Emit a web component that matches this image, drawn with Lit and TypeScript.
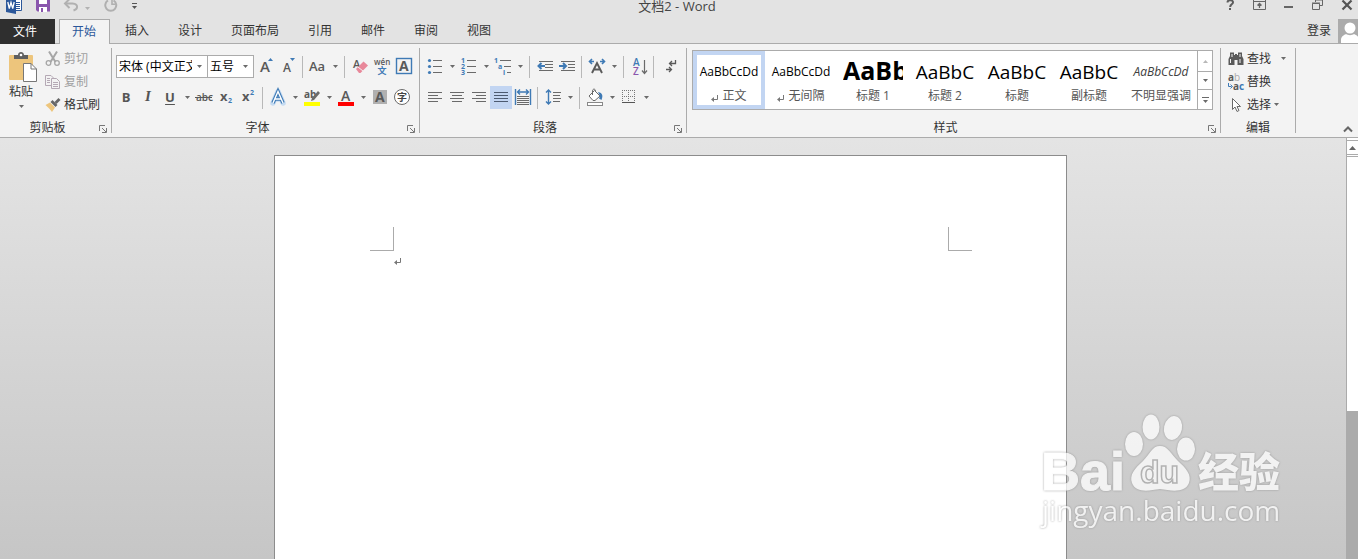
import { LitElement, html, svg, css, nothing, TemplateResult, SVGTemplateResult } from "lit";
import { customElement, property } from "lit/decorators.js";
import { classMap } from "lit/directives/class-map.js";

const icon = (w: number, h: number, body: SVGTemplateResult) =>
  html`<svg width=${w} height=${h} viewBox="0 0 ${w} ${h}" aria-hidden="true">${body}</svg>`;

const lines = (rows: number[][], stroke = "#6a6a6a") =>
  rows.map(([x1, x2, y]) => svg`<rect x=${x1} y=${y} width=${x2 - x1} height="1" fill=${stroke} />`);

const caret = icon(5, 3, svg`<path d="M0 0H5L2.500 3Z" fill="#6a6a6a"/>`);
const caretUp = (fill: string) => icon(7, 4, svg`<path d="M0 4H7L3.500 0Z" fill=${fill}/>`);
const returnMark = icon(7, 7, svg`<path d="M6.500 0V4.500H2" fill="none" stroke="#777"/><path d="M3 2V7L0 4.500Z" fill="#777"/>`);

const BLUE = "#3f7ab5";
const GREY = "#595959";

const icons: Record<string, TemplateResult> = {
  word: icon(16, 14, svg`<path d="M9 -3H15.500V10.500H9Z" fill="#fff" stroke="#2b579a"/>
    <path d="M10 2.500H14M10 4.500H14M10 6.500H14M10 8.500H14" stroke="#2b579a"/>
    <path d="M0 -2L10 -4V14L0 12Z" fill="#2b579a"/>
    <path d="M1.800 2L3.300 8.500L5 2.500L6.700 8.500L8.200 2" fill="none" stroke="#fff" stroke-width="1.300"/>`),
  save: icon(14, 12, svg`<path d="M0 -2H14V11.500H1.500L0 10Z" fill="#8a56ad"/><rect x="3" y="-2" width="8" height="6" fill="#fff"/>
    <rect x="3" y="7" width="8" height="5" fill="#fff"/><rect x="5" y="8" width="2" height="4" fill="#8a56ad"/>`),
  undo: icon(15, 12, svg`<path d="M2 3.500H8.500C12 3.500 13.500 5.500 13 7.500C12.700 9 11 10 9.500 10.500" fill="none" stroke="#b0b0b0" stroke-width="2"/>
    <path d="M5.500 -1L1 3.500L5.500 8" fill="none" stroke="#b0b0b0" stroke-width="2"/>`),
  redo: icon(14, 12, svg`<path d="M9.500 0.500A5.500 5.500 0 1 1 4 0.500" fill="none" stroke="#b0b0b0" stroke-width="2"/>
    <path d="M8 -1V4.200H11.500" fill="none" stroke="#b0b0b0" stroke-width="1.600"/>`),
  customize: icon(5, 12, svg`<rect y="3" width="5" height="1" fill="#555"/><path d="M0 6H5L2.500 9Z" fill="#555"/>`),
  help: icon(9, 12, svg`<path d="M1.500 2.500C1.500 -0.500 7 -0.500 7 2.200C7 4.500 4.200 4.200 4.200 7" fill="none" stroke="#5c5c5c" stroke-width="2"/><rect x="3" y="8" width="2" height="2" fill="#5c5c5c"/>`),
  ribbonMode: icon(13, 12, svg`<path d="M0.500 -1V9.500H12.500V-1M0 1.500H13" fill="none" stroke="#666"/><path d="M6.500 8V4M4.500 5.500L6.500 3.500L8.500 5.500" fill="none" stroke="#666" stroke-width="1.300"/>`),
  minimize: icon(9, 12, svg`<rect y="6" width="9" height="2" fill="#666"/>`),
  restore: icon(11, 12, svg`<path d="M3.500 2V-0.500H10.500V5.500H8M0.500 3.500H7.500V9.500H0.500ZM0 3H8M3 0H11" fill="none" stroke="#666"/>`),
  close: icon(10, 12, svg`<path d="M0.500 0.500L9.500 9.500M9.500 0.500L0.500 9.500" stroke="#555" stroke-width="2.200"/>`),
  avatar: icon(20, 24, svg`<rect width="20" height="24" fill="#ababab"/><circle cx="12" cy="9" r="5.500" fill="#fff"/>
    <path d="M3 24V21C3 17.500 6 16 8 15C10 16.500 14 16.500 16 15C18 16 20 17 20 18V24Z" fill="#fff"/>`),
  paste: icon(30, 32, svg`<g transform="translate(2 -1)"><rect x="1" y="4" width="24" height="25" rx="1" fill="#edc57c"/><path d="M6 4H10C10 0 16 0 16 4H20V8H6Z" fill="#5f5f5f"/><circle cx="13" cy="4" r="1.300" fill="#fff"/>
    <path d="M15.500 12.500H23L28.500 18V30.500H15.500Z" fill="#fff" stroke="#777"/><path d="M23 12.500V18H28.500" fill="none" stroke="#777"/></g>`),
  cut: icon(16, 16, svg`<path d="M4 0.500L10.500 11M12 0.500L5.500 11" stroke="#a6a6a6" stroke-width="2"/><circle cx="3.500" cy="12" r="2.300" fill="none" stroke="#a6a6a6" stroke-width="1.300"/><circle cx="12" cy="12" r="2.300" fill="none" stroke="#a6a6a6" stroke-width="1.300"/>`),
  copy: icon(16, 16, svg`<g fill="#f3f3f3" stroke="#b5a9b5"><path d="M0.500 1.500H6L8.500 4V11.500H0.500Z"/><path d="M6.500 4.500H11.500L14.500 7.500V14.500H6.500Z"/><path d="M2 4.500H5M2 6.500H5M2 8.500H5M8 8.500H13M8 10.500H13M8 12.500H13"/></g>`),
  painter: icon(16, 16, svg`<path d="M0.500 8L5 5.500L10 10.500L7 15C5 12 3 10.500 0.500 8Z" fill="#edc57c"/><path d="M5.500 5L7.500 3L12.500 8L10.500 10Z" fill="#666"/><path d="M9.500 5L13.500 1L15.500 3L11.500 7Z" fill="#666"/>`),
  grow: icon(16, 18, svg`<text class="g" x="2" y="15" font-size="15" font-weight="600">A</text><path d="M10 4H15L12.500 1Z" fill=${BLUE}/>`),
  shrink: icon(16, 18, svg`<text class="g" x="3" y="15" font-size="12" font-weight="600">A</text><path d="M10 1H15L12.500 4Z" fill=${BLUE}/>`),
  changeCase: icon(18, 18, svg`<text class="g" x="0" y="14" font-size="13" font-weight="600">Aa</text>`),
  clear: icon(16, 18, svg`<text class="g" x="1" y="11" font-size="11" font-weight="600">A</text><path d="M4 12L11.500 4.500L16 8.500L8.500 16H7Z" fill="#e8889a"/><path d="M6 10L11 14" stroke="#f3f3f3"/>`),
  phonetic: icon(18, 18, svg`<text class="g" x="1" y="8" font-size="8" font-weight="600">wén</text><text class="cjk" x="4.500" y="17" font-size="9" font-weight="700" fill=${BLUE}>文</text>`),
  border: icon(16, 18, svg`<rect x="0.500" y="1.500" width="15" height="15" fill="none" stroke=${BLUE} stroke-width="1.400"/><text class="g" x="3" y="14" font-size="14" font-weight="700">A</text>`),
  strike: icon(18, 16, svg`<text class="g" x="1" y="12" font-size="10" font-weight="600">abc</text><rect x="0" y="8" width="17" height="1" fill=${GREY}/>`),
  sub: icon(16, 16, svg`<text class="g" x="2" y="12" font-size="13" font-weight="700">x</text><text class="b" x="10" y="14" font-size="7" font-weight="700">2</text>`),
  sup: icon(16, 16, svg`<text class="g" x="2" y="12" font-size="13" font-weight="700">x</text><text class="b" x="10" y="6" font-size="7" font-weight="700">2</text>`),
  effects: icon(18, 18, svg`<path d="M4 15L9 3.500L14 15M6 11H12" fill="none" stroke="#c6dcf2" stroke-width="5.500" stroke-linejoin="round" stroke-linecap="round"/><path d="M4 15L9 3.500L14 15M6 11H12" fill="none" stroke=${BLUE} stroke-width="3.600"/><path d="M4 15L9 3.500L14 15M6 11H12" fill="none" stroke="#fff" stroke-width="1.400"/>`),
  highlight: icon(18, 18, svg`<text class="g" x="1" y="10" font-size="10" font-weight="700">ab</text><path d="M8 13L9 10L15 3L17 5L11 12Z" fill="#6a6a6a"/><rect x="1" y="14" width="16" height="4" fill="#ff0"/>`),
  fontColor: icon(18, 18, svg`<text class="g" x="4" y="13" font-size="14" font-weight="600">A</text><rect x="1" y="14" width="16" height="4" fill="#f00"/>`),
  shade: icon(14, 16, svg`<rect y="1" width="14" height="14" fill="#b0b0b0"/><text class="g" x="2" y="13" font-size="14" font-weight="700">A</text>`),
  enclose: icon(18, 18, svg`<circle cx="9" cy="9" r="7.500" fill="#fff" stroke="#6a6a6a"/><text class="cjk" x="4" y="12.700" font-size="10" fill="#444">字</text>`),
  bullets: icon(16, 16, svg`<g fill=${BLUE}><circle cx="2.500" cy="2.500" r="1.600"/><circle cx="2.500" cy="8.500" r="1.600"/><circle cx="2.500" cy="14.500" r="1.600"/></g>${lines([[6, 15, 2], [6, 15, 8], [6, 15, 14]])}`),
  numbers: icon(16, 18, svg`<g class="b" font-size="7" font-weight="700"><text x="0" y="6">1</text><text x="0" y="12">2</text><text x="0" y="18">3</text></g>${lines([[6, 15, 3], [6, 15, 9], [6, 15, 15]])}`),
  multilevel: icon(18, 18, svg`<g class="b" font-size="7" font-weight="700"><text x="0" y="6">1</text><text x="4" y="12">a</text><text x="9" y="18">i</text></g>${lines([[6, 17, 3], [10, 17, 9], [13, 17, 15]])}`),
  outdent: icon(16, 16, svg`${lines([[2, 16, 3], [8, 16, 6], [8, 16, 9], [2, 16, 12]])}<path d="M8 8H2M4.500 5L1.500 8L4.500 11" fill="none" stroke=${BLUE} stroke-width="2"/>`),
  indent: icon(16, 16, svg`${lines([[2, 16, 3], [9, 16, 6], [9, 16, 9], [2, 16, 12]])}<path d="M0 8H6M4 5L7 8L4 11" fill="none" stroke=${BLUE} stroke-width="2"/>`),
  scale: icon(18, 18, svg`<path d="M4 16L9 6L14 16M6 12.500H12" fill="none" stroke="#5a5a5a" stroke-width="1.900"/><path d="M6 4.500H2M4 2L1.500 4.500L4 7M12 4.500H16M14 2L16.500 4.500L14 7" fill="none" stroke=${BLUE} stroke-width="1.600"/>`),
  sort: icon(16, 18, svg`<text class="b" x="2" y="9" font-size="10" font-weight="600">A</text><text x="2" y="18" font-size="10" font-weight="600" fill="#8a56ad">Z</text><path d="M13.500 3V16M11 13.500L13.500 16.500L16 13.500" fill="none" stroke="#6a6a6a" stroke-width="1.200"/>`),
  marks: icon(14, 16, svg`<path d="M13.500 2V5.500H8M10 3L7.500 5.500L10 8M4 11.500H9M7 9L9.500 11.500L7 14" fill="none" stroke="#5a5a5a" stroke-width="1.300"/>`),
  left: icon(14, 16, svg`${lines([[0, 14, 3], [0, 10, 6], [0, 14, 9], [0, 10, 12]])}`),
  center: icon(14, 16, svg`${lines([[0, 14, 3], [2, 12, 6], [0, 14, 9], [2, 12, 12]])}`),
  right: icon(14, 16, svg`${lines([[0, 14, 3], [4, 14, 6], [0, 14, 9], [4, 14, 12]])}`),
  justify: icon(14, 16, svg`${lines([[0, 14, 3], [0, 14, 6], [0, 14, 9], [0, 14, 12]], "#4c5a70")}`),
  distribute: icon(16, 16, svg`<path d="M0.500 0V16M15.500 0V16M3 3H13M5 0.500L2.500 3L5 5.500M11 0.500L13.500 3L11 5.500" fill="none" stroke=${BLUE} stroke-width="1.400"/>${lines([[2, 14, 7], [2, 14, 9], [2, 14, 11], [2, 14, 13], [2, 14, 15]])}`),
  spacing: icon(16, 18, svg`<path d="M3.500 2V16M1 4.500L3.500 2L6 4.500M1 13.500L3.500 16L6 13.500" fill="none" stroke=${BLUE} stroke-width="1.400"/>${lines([[8, 16, 4], [8, 15, 7], [8, 16, 10], [8, 15, 13]])}`),
  bucket: icon(18, 18, svg`<path d="M3 8L8.500 2.500L14 8L9 12.500H7Z" fill="#fff" stroke="#6a6a6a"/><path d="M6.500 7V3C6.500 0.500 9.500 0.500 9.500 3" fill="none" stroke="#6a6a6a"/><path d="M12 4C17 5 17 8 15.500 12L13 10.500L14 8Z" fill=${BLUE}/><rect x="1.500" y="14.500" width="15" height="3" fill="#fff" stroke="#888"/>`),
  borders: icon(14, 16, svg`<path d="M0.500 1V12M6.500 1V12M12.500 1V12M0 1.500H13M0 7.500H13" stroke="#777" stroke-dasharray="1 1"/><rect y="13" width="13" height="1" fill="#555"/>`),
  find: icon(16, 16, svg`<path d="M2 1.500H6V4H7V3H9V4H10V1.500H14V5L15.500 8V14H9.500V9H6.500V14H0.500V8L2 5Z" fill="#5a5a5a"/><path d="M2.500 8V12M12 8V12M4 3V6M12 3V6" stroke="#f3f3f3"/>`),
  replace: icon(16, 18, svg`<text class="g" x="0" y="8" font-size="10" font-weight="700">a<tspan fill="#ababab" font-weight="400">b</tspan></text><text class="g" x="5" y="17" font-size="10" font-weight="700">a<tspan fill=${BLUE}>c</tspan></text><path d="M0.500 10V13.500H3.500M2.500 11.500L4.500 13.500L2.500 15.500" fill="none" stroke=${BLUE}/>`),
  select: icon(16, 16, svg`<path d="M4.500 1.500V12.500L7 10L9 14.500L11 13.500L9 9.500H12.500Z" fill="#fff" stroke="#6a6a6a"/>`),
  launcher: icon(8, 8, svg`<path d="M0.500 6V0.500H6M3 3L7 7M7.500 3V7.500H3" fill="none" stroke="#777"/>`),
};

/** A push button on a command row, optionally followed by its drop-down arrow. */
@customElement("ribbon-tool")
class RibbonTool extends LitElement {
  @property() name = "";
  @property() label = "";
  @property({ type: Boolean }) menu = false;
  @property({ type: Boolean }) pressed = false;

  static styles = css`
    :host { display: flex; height: 23px; }
    button { display: flex; align-items: center; justify-content: center; box-sizing: border-box; border: 0; padding: 0 0 2px; background: none; font: bold 13px "Open Sans", sans-serif; color: #555; }
    .main { width: 22px; }
    .main.pressed { background: #c2d5f2; }
    .drop { width: 12px; padding: 0; }
    svg { display: block; overflow: visible; font-family: "Open Sans", sans-serif; }
    .g { fill: #595959; }
    .b { fill: #3f7ab5; }
    .cjk { font-family: "Noto Sans CJK SC", sans-serif; }
    .italic { font-family: "Liberation Serif", serif; font-style: italic; font-size: 15px; }
    .under { text-decoration: underline; text-underline-offset: 2px; }
  `;

  private glyph() {
    if (this.name === "bold") return html`<span>B</span>`;
    if (this.name === "italic") return html`<span class="italic">I</span>`;
    if (this.name === "underline") return html`<span class="under">U</span>`;
    return icons[this.name];
  }

  render() {
    return html`<button class=${classMap({ main: true, pressed: this.pressed })} aria-label=${this.label} aria-pressed=${this.pressed}>${this.glyph()}</button>
      ${this.menu ? html`<button class="drop" aria-label="${this.label}选项">${caret}</button>` : nothing}`;
  }
}

/** A titled section of the ribbon. */
@customElement("ribbon-group")
class RibbonGroup extends LitElement {
  @property() label = "";
  @property({ type: Boolean }) launcher = false;

  static styles = css`
    :host { display: flex; flex-direction: column; flex: none; box-sizing: border-box; border-right: 1px solid #ababab; }
    .body { flex: 1; }
    .foot { display: flex; height: 10px; align-items: center; color: #333; }
    .title { flex: 1; text-align: center; line-height: 10px; }
    .launch { width: 16px; height: 10px; display: flex; align-items: center; justify-content: center; border: 0; padding: 2px 0 0; background: none; }
  `;

  render() {
    return html`<div class="body"><slot></slot></div>
      <div class="foot"><span class="title">${this.label}</span>
        ${this.launcher ? html`<button class="launch" aria-label="${this.label}设置">${icons.launcher}</button>` : nothing}</div>`;
  }
}

interface StyleEntry { name: string; sample: string; look: string; mark?: boolean; }

const gallery: StyleEntry[] = [
  { name: "正文", sample: "AaBbCcDd", look: "body", mark: true },
  { name: "无间隔", sample: "AaBbCcDd", look: "body", mark: true },
  { name: "标题 1", sample: "AaBb", look: "h1" },
  { name: "标题 2", sample: "AaBbC", look: "h2" },
  { name: "标题", sample: "AaBbC", look: "h2" },
  { name: "副标题", sample: "AaBbC", look: "h2" },
  { name: "不明显强调", sample: "AaBbCcDd", look: "subtle" },
];

const tool = (name: string, label: string, menu = false, pressed = false) =>
  html`<ribbon-tool .name=${name} .label=${label} .menu=${menu} .pressed=${pressed}></ribbon-tool>`;
const sep = html`<span class="sep"></span>`;

@customElement("app-root")
class AppRoot extends LitElement {
  static styles = css`
    :host { display: flex; flex-direction: column; height: 100vh; overflow: hidden; position: relative; background: #e3e3e3; color: #333; font: 12px/16px "Open Sans", "Noto Sans CJK SC", sans-serif; }
    button, select { font: inherit; color: inherit; }
    button { border: 0; padding: 0; background: none; }
    svg { display: block; flex: none; font-family: "Open Sans", sans-serif; overflow: visible; }
    .g { fill: #595959; }

    .titlebar { display: grid; grid-template-columns: 1fr auto 1fr; height: 19px; flex: none; overflow: hidden; }
    .quick { display: flex; align-items: flex-start; padding-left: 6px; gap: 14px; }
    .undo { display: flex; gap: 6px; }
    .undo .drop { padding-top: 4px; opacity: 0.4; }
    .caption { height: 12px; line-height: 12px; font-size: 13px; color: #444; padding-right: 4px; }
    .window { display: flex; align-items: flex-start; justify-content: flex-end; }
    .window button { width: 29px; display: flex; justify-content: center; box-sizing: border-box; }
    .window button:last-child { width: 26px; padding-left: 4px; }

    .tabs { display: flex; height: 25px; flex: none; border-bottom: 1px solid #ababab; box-sizing: border-box; }
    .tab { display: flex; align-items: center; padding: 0 14px 0 15px; color: #333; text-decoration: none; }
    .file { background: #2f2f2f; color: #fff; width: 55px; justify-content: center; height: 25px; flex: none; margin-bottom: -1px; box-sizing: border-box; padding: 0 5px 0 0; }
    .active { background: #f3f3f3; color: #2b579a; border: 1px solid #ababab; border-bottom: 0; margin: 0 0 -1px 4px; padding: 0 13px 0 12px; height: 24px; }
    .account { margin-left: auto; display: flex; align-items: center; gap: 7px; }

    .ribbon { display: flex; flex: none; height: 94px; box-sizing: border-box; padding: 4px 0; background: #f3f3f3; border-bottom: 1px solid #ababab; }
    .clip { width: 112px; }
    .font { width: 308px; }
    .para { width: 267px; }
    .styles { width: 534px; }
    .edit { width: 75px; }
    .collapse { margin: auto 5px 0 auto; }

    .columns { display: flex; }
    .paste { width: 36px; display: flex; flex-direction: column; align-items: center; padding: 4px 0 0 6px; }
    .paste .text { margin: 0 0 5px; }
    .list { display: flex; flex-direction: column; gap: 2px; padding-left: 9px; }
    .list button { display: flex; align-items: center; height: 21px; gap: 3px; }
    .list button:disabled { color: #a0a0a0; }
    .list.editing { padding-left: 7px; }
    .editing .far { margin-left: 7px; }

    .row { display: flex; align-items: center; height: 23px; padding-left: 3px; }
    .para .row { padding-left: 4px; }
    .row.first { margin: 7px 0 8px; }
    .row.combos { padding-left: 4px; }
    .sep { width: 1px; height: 22px; background: #b8b8b8; margin: 0 4px 0 3px; }
    .combo { display: grid; box-sizing: border-box; height: 23px; border: 1px solid #ababab; background: #fff; align-items: center; color: #000; }
    .combo select { grid-area: 1 / 1; appearance: none; border: 0; background: none; padding: 0 15px 0 2px; width: 100%; height: 21px; min-width: 0; outline: 0; }
    .combo svg { grid-area: 1 / 1; justify-self: end; margin-right: 5px; pointer-events: none; }
    .face { width: 92px; }
    .size { width: 47px; margin: 0 1px 0 -1px; }

    .gallery { display: flex; box-sizing: border-box; height: 60px; margin: 2px 7px 0 5px; border: 1px solid #ababab; background: #fff; }
    .style { width: 72px; display: flex; flex-direction: column; align-items: center; flex: none; box-sizing: border-box; border: 4px solid transparent; }
    .style.chosen { border-color: #c2d5f2; }
    .sample { height: 33px; width: 60px; line-height: 34px; overflow: hidden; white-space: nowrap; color: #000; text-align: center; flex: none; }
    .body { font-size: 12px; }
    .h1 { font-size: 25px; font-weight: 700; text-align: left; line-height: 30px; }
    .h2 { font-size: 19px; line-height: 34px; }
    .subtle { font-style: italic; color: #404040; }
    .name { display: flex; align-items: center; gap: 4px; white-space: nowrap; color: #555; }
    .name svg { margin-top: 4px; }
    .scroll { margin-left: auto; width: 15px; display: grid; grid-template-rows: 20px 18px 1fr; border-left: 1px solid #ababab; }
    .scroll button { display: grid; place-items: center; place-content: center; }
    .scroll button + button { border-top: 1px solid #ababab; }

    .desk { flex: 1; min-height: 0; display: flex; background: linear-gradient(#e4e4e4, #c6c6c6); }
    .view { flex: 1; display: flex; justify-content: center; padding: 17px 5px 0 0; overflow: hidden; }
    .page { width: 793px; min-height: 1122px; flex: none; box-sizing: border-box; border: 1px solid #8c8c8c; background: #fff; padding: 71px 94px 0 95px; }
    .margins { display: flex; justify-content: space-between; }
    .corner { width: 24px; height: 24px; box-sizing: border-box; border-bottom: 1px solid #ababab; }
    .corner.l { border-right: 1px solid #ababab; }
    .corner.r { border-left: 1px solid #ababab; }
    .line { padding: 7px 0 0 24px; }
    .track { width: 12px; display: flex; flex-direction: column; flex: none; border-left: 1px solid #ababab; box-sizing: border-box; background: #fff; }
    .up { height: 15px; flex: none; display: grid; place-items: center; border: solid #ababab; border-width: 1px 0; margin-top: 2px; }
    .trough { border-top: 1px solid #ababab; margin-top: 1px; height: 254px; flex: none; }
    .thumb { flex: 1; background: #ababab; }

    .watermark { position: absolute; right: 74px; bottom: 27px; opacity: 0.75; pointer-events: none; }
    .watermark svg { filter: drop-shadow(0 0 1px #888); }
  `;

  private titleBar() {
    return html`<header class="titlebar">
      <div class="quick">
        ${icons.word}
        <button aria-label="保存">${icons.save}</button>
        <span class="undo"><button aria-label="撤消">${icons.undo}</button><button class="drop" aria-label="撤消选项">${caret}</button></span>
        <button aria-label="重复">${icons.redo}</button>
        <button aria-label="自定义快速访问工具栏">${icons.customize}</button>
      </div>
      <div class="caption">文档2 - Word</div>
      <div class="window">
        <button aria-label="帮助">${icons.help}</button>
        <button aria-label="功能区显示选项">${icons.ribbonMode}</button>
        <button aria-label="最小化">${icons.minimize}</button>
        <button aria-label="还原">${icons.restore}</button>
        <button aria-label="关闭">${icons.close}</button>
      </div>
    </header>`;
  }

  private tabs() {
    const names = ["插入", "设计", "页面布局", "引用", "邮件", "审阅", "视图"];
    return html`<nav class="tabs">
      <a class="tab file" href="#file">文件</a>
      <a class="tab active" href="#home" aria-current="page">开始</a>
      ${names.map((n) => html`<a class="tab" href="#${n}">${n}</a>`)}
      <button class="account">登录 ${icons.avatar}</button>
    </nav>`;
  }

  private ribbon() {
    return html`<section class="ribbon">
      <ribbon-group class="clip" label="剪贴板" launcher>
        <div class="columns">
          <button class="paste">${icons.paste}<span class="text">粘贴</span>${caret}</button>
          <div class="list">
            <button disabled>${icons.cut}剪切</button>
            <button disabled>${icons.copy}复制</button>
            <button>${icons.painter}格式刷</button>
          </div>
        </div>
      </ribbon-group>

      <ribbon-group class="font" label="字体" launcher>
        <div class="row first combos">
          <label class="combo face"><select aria-label="字体"><option>宋体 (中文正文)</option></select>${caret}</label>
          <label class="combo size"><select aria-label="字号"><option>五号</option></select>${caret}</label>
          ${tool("grow", "增大字号")}${tool("shrink", "减小字号")}${sep}
          ${tool("changeCase", "更改大小写", true)}${sep}
          ${tool("clear", "清除所有格式")}${tool("phonetic", "拼音指南")}${tool("border", "字符边框")}
        </div>
        <div class="row">
          ${tool("bold", "加粗")}${tool("italic", "倾斜")}${tool("underline", "下划线", true)}
          ${tool("strike", "删除线")}${tool("sub", "下标")}${tool("sup", "上标")}${sep}
          ${tool("effects", "文本效果", true)}${tool("highlight", "突出显示", true)}${tool("fontColor", "字体颜色", true)}
          ${tool("shade", "字符底纹")}${tool("enclose", "带圈字符")}
        </div>
      </ribbon-group>

      <ribbon-group class="para" label="段落" launcher>
        <div class="row first">
          ${tool("bullets", "项目符号", true)}${tool("numbers", "编号", true)}${tool("multilevel", "多级列表", true)}${sep}
          ${tool("outdent", "减少缩进量")}${tool("indent", "增加缩进量")}${sep}
          ${tool("scale", "中文版式", true)}${sep}${tool("sort", "排序")}${sep}${tool("marks", "显示编辑标记")}
        </div>
        <div class="row">
          ${tool("left", "左对齐")}${tool("center", "居中")}${tool("right", "右对齐")}${tool("justify", "两端对齐", false, true)}${tool("distribute", "分散对齐")}${sep}
          ${tool("spacing", "行距", true)}${sep}
          ${tool("bucket", "底纹", true)}${tool("borders", "边框", true)}
        </div>
      </ribbon-group>

      <ribbon-group class="styles" label="样式" launcher>
        <div class="gallery">
          ${gallery.map((s, i) => html`<button class=${classMap({ style: true, chosen: i === 0 })}>
            <span class="sample ${s.look}">${s.sample}</span>
            <span class="name">${s.mark ? returnMark : nothing}${s.name}</span>
          </button>`)}
          <div class="scroll">
            <button aria-label="上一行" disabled>${icon(5, 3, svg`<path d="M0 3H5L2.500 0Z" fill="#b8b8b8"/>`)}</button>
            <button aria-label="下一行">${caret}</button>
            <button aria-label="其他">${icon(7, 6, svg`<rect width="7" height="1" fill="#6a6a6a"/><path d="M1 3H6L3.500 6Z" fill="#6a6a6a"/>`)}</button>
          </div>
        </div>
      </ribbon-group>

      <ribbon-group class="edit" label="编辑">
        <div class="list editing">
          <button>${icons.find}查找<span class="far">${caret}</span></button>
          <button>${icons.replace}替换</button>
          <button>${icons.select}选择${caret}</button>
        </div>
      </ribbon-group>
      <button class="collapse" aria-label="折叠功能区">${icon(10, 7, svg`<path d="M1 5.500L5 1.500L9 5.500" fill="none" stroke="#666" stroke-width="2"/>`)}</button>
    </section>`;
  }

  private watermark() {
    return html`<div class="watermark"><svg width="242" height="118" viewBox="0 0 242 118" fill="#fff">
      <text x="-1" y="76" font-family="Liberation Sans, sans-serif" font-weight="700" font-size="54" stroke="#fff" stroke-width="1">Bai</text>
      <ellipse cx="92" cy="30" rx="9" ry="12"/><ellipse cx="109" cy="13" rx="8.500" ry="12.500"/><ellipse cx="131" cy="14" rx="9" ry="12" transform="rotate(12 131 14)"/><ellipse cx="144" cy="35" rx="9" ry="11.500"/>
      <path d="M118 32C126 32 129 40 136 47C144 54 150 61 147 69C143 79 130 77 118 75C106 77 94 79 90 69C87 61 93 54 101 47C108 40 110 32 118 32Z"/>
      <text x="98" y="69" font-family="Liberation Sans, sans-serif" font-weight="700" font-size="32" fill="#fff" stroke="#aaa" stroke-width="1.500">du</text>
      <text x="156" y="73" font-family="Noto Sans CJK SC, sans-serif" font-weight="900" font-size="41">经验</text>
      <text x="0" y="107" font-family="Open Sans, sans-serif" font-size="28">jingyan.baidu.com</text>
    </svg></div>`;
  }

  render() {
    return html`${this.titleBar()}${this.tabs()}${this.ribbon()}
      <main class="desk">
        <div class="view">
          <article class="page">
            <div class="margins"><span class="corner l"></span><span class="corner r"></span></div>
            <div class="line">${returnMark}</div>
          </article>
        </div>
        <div class="track"><button class="up" aria-label="向上滚动">${caretUp("#666")}</button><div class="trough"></div><div class="thumb"></div></div>
      </main>
      ${this.watermark()}`;
  }
}
